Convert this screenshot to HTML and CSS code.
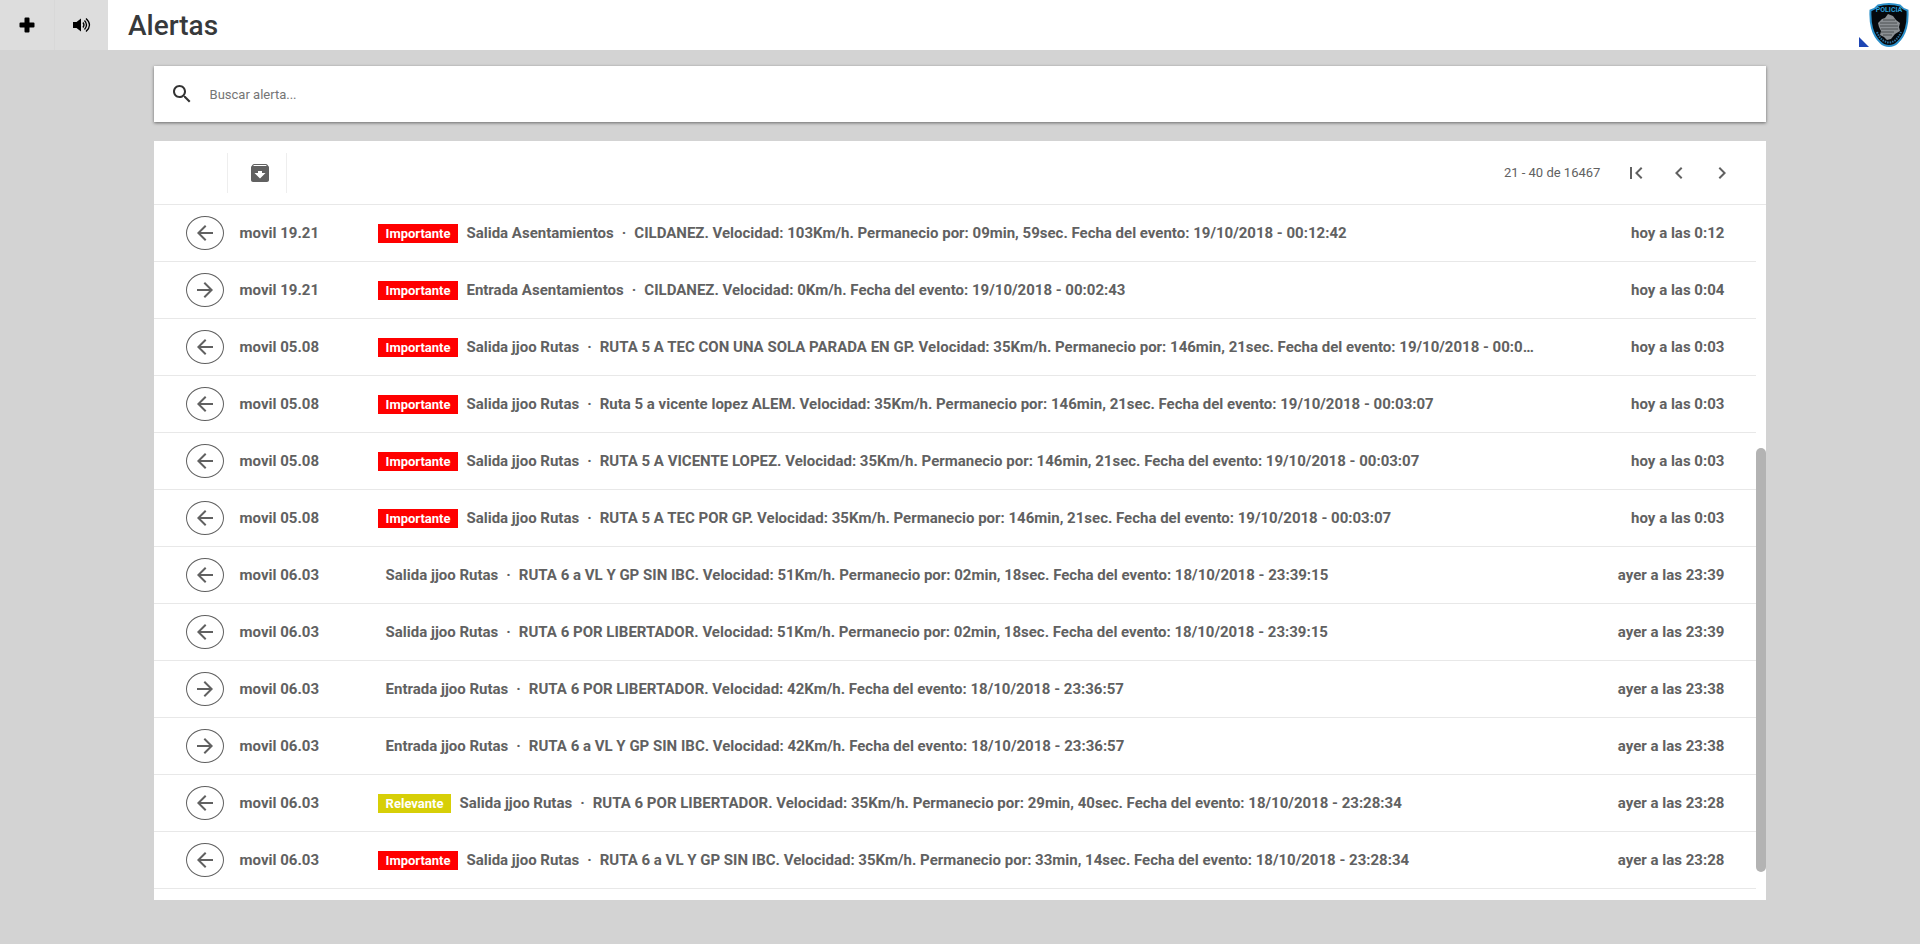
FILE: index.html
```html
<!DOCTYPE html>
<html lang="es">
<head>
    <meta charset="UTF-8">
    <meta name="viewport" content="width=device-width, initial-scale=1.0">
    <title>Alertas</title>
    <link rel="stylesheet" href="styles.css">
</head>
<body>
    <!-- iconos reutilizables -->
    <svg class="icon-defs" aria-hidden="true">
        <symbol id="arrow-left" viewBox="0 0 24 24">
            <path d="M20 11H7.83l5.59-5.59L12 4l-8 8 8 8 1.41-1.41L7.83 13H20v-2z"/>
        </symbol>
        <symbol id="arrow-right" viewBox="0 0 24 24">
            <path d="M12 4l-1.41 1.41L16.17 11H4v2h12.17l-5.58 5.59L12 20l8-8z"/>
        </symbol>
    </svg>

    <header class="header">
        <button class="header-button" aria-label="Agregar">
            <svg width="16" height="16" viewBox="0 0 16 16"><path d="M6.500 .5h3a1 1 0 0 1 1 1v4h4a1 1 0 0 1 1 1v3a1 1 0 0 1-1 1h-4v4a1 1 0 0 1-1 1h-3a1 1 0 0 1-1-1v-4h-4a1 1 0 0 1-1-1v-3a1 1 0 0 1 1-1h4v-4a1 1 0 0 1 1-1z"/></svg>
        </button>
        <button class="header-button" aria-label="Sonido">
            <svg width="18" height="16" viewBox="0 0 18 16">
                <path d="M0 5h3.500L8 1.500v13L3.500 11H0z"/>
                <path d="M10 5.500q2 2.500 0 5M11.500 3.500q4 4.500 0 9M13 1.500q7 6.500 0 13" fill="none" stroke="#000" stroke-width="1.300"/>
            </svg>
        </button>
        <h1 class="header-title">Alertas</h1>
        <div class="header-logo">
            <svg width="10" height="10" viewBox="0 0 10 10"><path d="M0 0l10 10H0z" fill="#1e46b4"/></svg>
            <svg width="40" height="44" viewBox="0 0 40 44">
                <path d="M9 2.500Q20-.5 31 2.500q2.500 3.500 7.500 5Q39 18 37 25q-2.500 9-8.500 14.500Q25 43 20 43t-8.500-3.500Q5.500 34 3 25 1 18 1.500 7.500q5-1.500 7.500-5z" fill="#05080c" stroke="#2b8fc9" stroke-width="2"/>
                <path d="M9 20l4-4 3-1 3-4 5 2 3 4 4 3-1 4 1 4-5 3-4 5-4 1-3-3-4-2 1-4-2-4z" fill="#8b8f93"/>
                <path d="M14 17h12M11 20h17M11 23h18M12 26h17M12 29h13M14 32h9" stroke="#4d5053" stroke-width="1"/>
                <path d="M8 29q4 10 12 10.500 8-.5 12-10.500" fill="none" stroke="#2b6f9c" stroke-width="2" stroke-dasharray="1.500 1"/>
                <text x="20" y="9" class="logo-text">POLICIA</text>
            </svg>
        </div>
    </header>

    <main class="content">
        <form class="search-box">
            <label class="search-label" for="search" aria-label="Buscar alerta">
                <svg width="24" height="24" viewBox="0 0 24 24"><path d="M15.500 14h-.79l-.28-.27C15.410 12.590 16 11.110 16 9.500 16 5.910 13.090 3 9.500 3S3 5.910 3 9.500 5.910 16 9.500 16c1.610 0 3.090-.59 4.230-1.570l.27.28v.79l5 4.990L20.490 19l-4.990-5zm-6 0C7.010 14 5 11.990 5 9.500S7.010 5 9.500 5 14 7.010 14 9.500 11.990 14 9.500 14z"/></svg>
            </label>
            <input type="text" id="search" class="search-input" placeholder="Buscar alerta...">
        </form>

        <section class="alerts">
            <div class="toolbar">
                <div class="toolbar-actions">
                    <button class="icon-button" aria-label="Archivar">
                        <svg width="24" height="24" viewBox="0 0 24 24"><path d="M20.540 5.230l-1.390-1.680C18.880 3.210 18.470 3 18 3H6c-.47 0-.88.21-1.160.55L3.460 5.230C3.170 5.570 3 6.020 3 6.500V19c0 1.100.9 2 2 2h14c1.100 0 2-.9 2-2V6.500c0-.48-.17-.93-.46-1.270zM12 17.500L6.500 12H10v-2h4v2h3.500L12 17.500zM5.120 5l.81-1h12l.94 1H5.120z"/></svg>
                    </button>
                </div>
                <span class="page-count">21 - 40 de 16467</span>
                <button class="icon-button" aria-label="Primera página">
                    <svg width="24" height="24" viewBox="0 0 24 24"><path d="M18.410 16.590L13.820 12l4.590-4.590L17 6l-6 6 6 6zM6 6h2v12H6z"/></svg>
                </button>
                <button class="icon-button" aria-label="Página anterior">
                    <svg width="24" height="24" viewBox="0 0 24 24"><path d="M15.410 7.410L14 6l-6 6 6 6 1.410-1.410L10.830 12z"/></svg>
                </button>
                <button class="icon-button" aria-label="Página siguiente">
                    <svg width="24" height="24" viewBox="0 0 24 24"><path d="M10 6L8.590 7.410 13.170 12l-4.580 4.590L10 18l6-6z"/></svg>
                </button>
            </div>

            <div class="alerts-list">
                <table class="alerts-table">
                    <tbody>
                        <tr>
                            <td class="col-icon"><span class="circle"><svg><use href="#arrow-left"/></svg></span></td>
                            <td class="col-name">movil 19.21</td>
                            <td class="col-message"><span class="badge important">Importante</span><span class="type">Salida Asentamientos</span>·<span class="detail">CILDANEZ. Velocidad: 103Km/h. Permanecio por: 09min, 59sec. Fecha del evento: 19/10/2018 - 00:12:42</span></td>
                            <td class="col-date">hoy a las 0:12</td>
                        </tr>
                        <tr>
                            <td class="col-icon"><span class="circle"><svg><use href="#arrow-right"/></svg></span></td>
                            <td class="col-name">movil 19.21</td>
                            <td class="col-message"><span class="badge important">Importante</span><span class="type">Entrada Asentamientos</span>·<span class="detail">CILDANEZ. Velocidad: 0Km/h. Fecha del evento: 19/10/2018 - 00:02:43</span></td>
                            <td class="col-date">hoy a las 0:04</td>
                        </tr>
                        <tr>
                            <td class="col-icon"><span class="circle"><svg><use href="#arrow-left"/></svg></span></td>
                            <td class="col-name">movil 05.08</td>
                            <td class="col-message"><span class="badge important">Importante</span><span class="type">Salida jjoo Rutas</span>·<span class="detail">RUTA 5 A TEC CON UNA SOLA PARADA EN GP. Velocidad: 35Km/h. Permanecio por: 146min, 21sec. Fecha del evento: 19/10/2018 - 00:03:07</span></td>
                            <td class="col-date">hoy a las 0:03</td>
                        </tr>
                        <tr>
                            <td class="col-icon"><span class="circle"><svg><use href="#arrow-left"/></svg></span></td>
                            <td class="col-name">movil 05.08</td>
                            <td class="col-message"><span class="badge important">Importante</span><span class="type">Salida jjoo Rutas</span>·<span class="detail">Ruta 5 a vicente lopez ALEM. Velocidad: 35Km/h. Permanecio por: 146min, 21sec. Fecha del evento: 19/10/2018 - 00:03:07</span></td>
                            <td class="col-date">hoy a las 0:03</td>
                        </tr>
                        <tr>
                            <td class="col-icon"><span class="circle"><svg><use href="#arrow-left"/></svg></span></td>
                            <td class="col-name">movil 05.08</td>
                            <td class="col-message"><span class="badge important">Importante</span><span class="type">Salida jjoo Rutas</span>·<span class="detail">RUTA 5 A VICENTE LOPEZ. Velocidad: 35Km/h. Permanecio por: 146min, 21sec. Fecha del evento: 19/10/2018 - 00:03:07</span></td>
                            <td class="col-date">hoy a las 0:03</td>
                        </tr>
                        <tr>
                            <td class="col-icon"><span class="circle"><svg><use href="#arrow-left"/></svg></span></td>
                            <td class="col-name">movil 05.08</td>
                            <td class="col-message"><span class="badge important">Importante</span><span class="type">Salida jjoo Rutas</span>·<span class="detail">RUTA 5 A TEC POR GP. Velocidad: 35Km/h. Permanecio por: 146min, 21sec. Fecha del evento: 19/10/2018 - 00:03:07</span></td>
                            <td class="col-date">hoy a las 0:03</td>
                        </tr>
                        <tr>
                            <td class="col-icon"><span class="circle"><svg><use href="#arrow-left"/></svg></span></td>
                            <td class="col-name">movil 06.03</td>
                            <td class="col-message"><span class="type">Salida jjoo Rutas</span>·<span class="detail">RUTA 6 a VL Y GP SIN IBC. Velocidad: 51Km/h. Permanecio por: 02min, 18sec. Fecha del evento: 18/10/2018 - 23:39:15</span></td>
                            <td class="col-date">ayer a las 23:39</td>
                        </tr>
                        <tr>
                            <td class="col-icon"><span class="circle"><svg><use href="#arrow-left"/></svg></span></td>
                            <td class="col-name">movil 06.03</td>
                            <td class="col-message"><span class="type">Salida jjoo Rutas</span>·<span class="detail">RUTA 6 POR LIBERTADOR. Velocidad: 51Km/h. Permanecio por: 02min, 18sec. Fecha del evento: 18/10/2018 - 23:39:15</span></td>
                            <td class="col-date">ayer a las 23:39</td>
                        </tr>
                        <tr>
                            <td class="col-icon"><span class="circle"><svg><use href="#arrow-right"/></svg></span></td>
                            <td class="col-name">movil 06.03</td>
                            <td class="col-message"><span class="type">Entrada jjoo Rutas</span>·<span class="detail">RUTA 6 POR LIBERTADOR. Velocidad: 42Km/h. Fecha del evento: 18/10/2018 - 23:36:57</span></td>
                            <td class="col-date">ayer a las 23:38</td>
                        </tr>
                        <tr>
                            <td class="col-icon"><span class="circle"><svg><use href="#arrow-right"/></svg></span></td>
                            <td class="col-name">movil 06.03</td>
                            <td class="col-message"><span class="type">Entrada jjoo Rutas</span>·<span class="detail">RUTA 6 a VL Y GP SIN IBC. Velocidad: 42Km/h. Fecha del evento: 18/10/2018 - 23:36:57</span></td>
                            <td class="col-date">ayer a las 23:38</td>
                        </tr>
                        <tr>
                            <td class="col-icon"><span class="circle"><svg><use href="#arrow-left"/></svg></span></td>
                            <td class="col-name">movil 06.03</td>
                            <td class="col-message"><span class="badge relevant">Relevante</span><span class="type">Salida jjoo Rutas</span>·<span class="detail">RUTA 6 POR LIBERTADOR. Velocidad: 35Km/h. Permanecio por: 29min, 40sec. Fecha del evento: 18/10/2018 - 23:28:34</span></td>
                            <td class="col-date">ayer a las 23:28</td>
                        </tr>
                        <tr>
                            <td class="col-icon"><span class="circle"><svg><use href="#arrow-left"/></svg></span></td>
                            <td class="col-name">movil 06.03</td>
                            <td class="col-message"><span class="badge important">Importante</span><span class="type">Salida jjoo Rutas</span>·<span class="detail">RUTA 6 a VL Y GP SIN IBC. Velocidad: 35Km/h. Permanecio por: 33min, 14sec. Fecha del evento: 18/10/2018 - 23:28:34</span></td>
                            <td class="col-date">ayer a las 23:28</td>
                        </tr>
                    </tbody>
                </table>
                <div class="scroll-thumb"></div>
            </div>
        </section>
    </main>
</body>
</html>
```
FILE: styles.css
```css
* {
    box-sizing: border-box;
}

body {
    margin: 0;
    height: 100vh;
    display: flex;
    flex-direction: column;
    font-family: Roboto, Arial, sans-serif;
    background-color: #d3d3d3;
    color: #616161;
}

button {
    border: none;
    padding: 0;
    cursor: pointer;
}

svg {
    display: block;
}

.icon-defs {
    display: none;
}

/* Header */
.header {
    display: flex;
    align-items: center;
    height: 50px;
    flex-shrink: 0;
    background-color: #fff;
}

.header-button {
    display: flex;
    align-items: center;
    justify-content: center;
    width: 54px;
    height: 50px;
    background-color: #ddd;
}

.header-button + .header-button {
    border-left: 1px solid #d8d8d8;
}

.header-title {
    flex: 1;
    margin: 0 0 0 20px;
    font-size: 28px;
    font-weight: 500;
    color: #37393b;
}

.header-logo {
    display: flex;
    align-items: flex-end;
    margin-right: 11px;
}

.logo-text {
    font-size: 7px;
    font-weight: bold;
    text-anchor: middle;
    fill: #2b9fd9;
}

/* Contenido */
.content {
    display: flex;
    flex-direction: column;
    flex: 1;
    gap: 19px;
    width: 84%;
    min-height: 0;
    margin: 0 auto;
    padding: 16px 0 44px;
}

.search-box {
    display: flex;
    align-items: center;
    height: 56px;
    flex-shrink: 0;
    padding: 0 16px;
    background-color: #fff;
    box-shadow: 0 1px 3px rgba(0, 0, 0, 0.5);
}

.search-label {
    fill: #333;
}

.search-input {
    flex: 1;
    margin-left: 16px;
    padding: 0;
    border: none;
    outline: none;
    font-family: inherit;
    font-size: 13px;
    color: #333;
}

.search-input::placeholder {
    color: #757575;
}

.alerts {
    display: flex;
    flex-direction: column;
    flex: 1;
    min-height: 0;
    background-color: #fff;
}

.toolbar {
    display: flex;
    align-items: center;
    height: 64px;
    flex-shrink: 0;
    padding-right: 23px;
    border-bottom: 1px solid #e8e8e8;
}

.toolbar-actions {
    display: flex;
    justify-content: center;
    width: 60px;
    height: 40px;
    margin-left: 73px;
    margin-right: auto;
    padding-left: 6px;
    border-left: 1px solid #eee;
    border-right: 1px solid #eee;
}

.icon-button {
    display: flex;
    align-items: center;
    justify-content: center;
    width: 43px;
    height: 40px;
    background: none;
    fill: #616161;
}

.page-count {
    margin-right: 14px;
    font-size: 13px;
}

/* Lista de alertas */
.alerts-list {
    position: relative;
    flex: 1;
    min-height: 0;
    overflow: hidden;
    padding-right: 10px;
}

.alerts-table {
    width: 100%;
    table-layout: fixed;
    border-spacing: 0;
    font-size: 15px;
    font-weight: bold;
}

.alerts-table td {
    height: 57px;
    padding: 0;
    border-bottom: 1px solid #e8e8e8;
    white-space: nowrap;
}

.alerts-table .col-icon {
    width: 86px;
    padding-left: 32px;
}

.col-name {
    width: 138px;
}

.alerts-table .col-message {
    overflow: hidden;
    text-overflow: ellipsis;
}

.alerts-table .col-date {
    width: 220px;
    padding-right: 32px;
    text-align: right;
}

.circle {
    display: flex;
    align-items: center;
    justify-content: center;
    width: 38px;
    height: 34px;
    border: 1px solid #616161;
    border-radius: 50%;
}

.circle svg {
    width: 24px;
    height: 24px;
    fill: #616161;
}

.badge {
    display: inline-block;
    height: 19px;
    padding: 0 8px;
    font-size: 13px;
    line-height: 19px;
    color: #fff;
}

.important {
    background-color: #f00;
}

.relevant {
    background-color: #d7cf07;
}

.type {
    margin: 0 8px;
}

.detail {
    margin-left: 8px;
}

.scroll-thumb {
    position: absolute;
    top: 35%;
    right: 0;
    width: 10px;
    height: 61%;
    border-radius: 5px;
    background-color: #b3b3b3;
}
```
